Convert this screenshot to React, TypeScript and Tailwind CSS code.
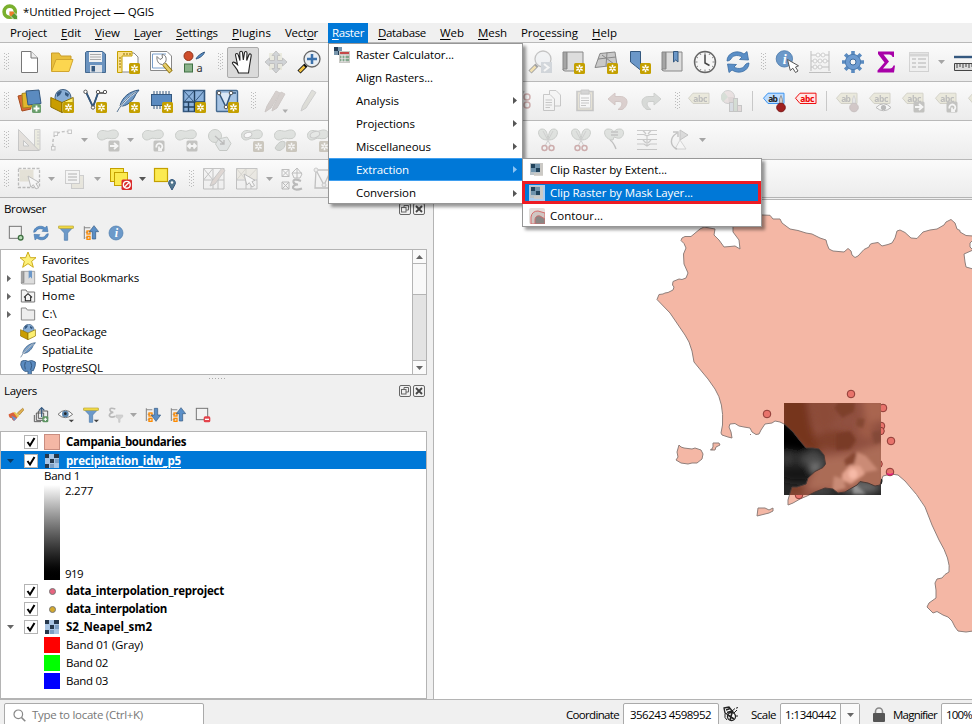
import { useLayoutEffect, useRef } from "react";
import type { ReactNode } from "react";

/* Text run whose tracking is adjusted so that it occupies a given width. */
function T({ w, c = "", children }: { w: number; c?: string; children: ReactNode }) {
  const ref = useRef<HTMLSpanElement>(null);
  useLayoutEffect(() => {
    const el = ref.current;
    if (!el) return;
    el.style.letterSpacing = "0px";
    const n = (el.textContent || "").length;
    el.style.letterSpacing = (w - el.getBoundingClientRect().width) / n + "px";
  }, [w]);
  return (
    <span ref={ref} className={"inline-block whitespace-pre shrink-0 " + c}>
      {children}
    </span>
  );
}

const U = ({ children }: { children: ReactNode }) => (
  <span className="underline underline-offset-2 decoration-1">{children}</span>
);

function I({ children, dim = false }: { children: ReactNode; dim?: boolean }) {
  return (
    <svg viewBox="0 0 24 24" fill="none" className={dim ? "h-6 w-6 shrink-0 overflow-visible opacity-35" : "h-6 w-6 shrink-0 overflow-visible"}>
      {children}
    </svg>
  );
}

function Cell({ children }: { children?: ReactNode }) {
  return <div className="flex h-8 w-[33px] shrink-0 items-center justify-center">{children}</div>;
}

function Grip({ c = "w-4 pr-[3px]" }: { c?: string }) {
  return (
    <div className={"flex shrink-0 items-center justify-end " + c}>
      <svg className="h-[18px] w-[5px]" viewBox="0 0 5 18">
        {[0, 3, 6, 9, 12, 15].map((y) => (
          <g key={y} fill="#bcbcbc">
            <rect x="0" y={y} width="1" height="1" />
            <rect x="2" y={y + 1} width="1" height="1" />
            <rect x="4" y={y} width="1" height="1" />
          </g>
        ))}
      </svg>
    </div>
  );
}

function Arrow({ c = "w-3", dark = false }: { c?: string; dark?: boolean }) {
  return (
    <div className={"flex shrink-0 items-center justify-center " + c}>
      <svg className="h-1 w-[7px]" viewBox="0 0 7 4">
        <path d="M0 0H7L3.5 4Z" fill={dark ? "#555" : "#a5a5a5"} />
      </svg>
    </div>
  );
}

const Sep = ({ c }: { c: string }) => (
  <div className={"flex h-5 shrink-0 justify-center " + c}>
    <div className="w-px bg-[#c8c8c8]" />
  </div>
);

function Bar({ h, children }: { h: string; children: ReactNode }) {
  return (
    <div
      className={
        "flex shrink-0 items-center overflow-hidden border-t border-[#b9b9b9] bg-gradient-to-b from-[#fbfbfb] to-[#ececec] " + h
      }
    >
      {children}
    </div>
  );
}

/* ---------- icon parts ---------- */
const Star = ({ fill = "#c4a000" }: { fill?: string }) => (
  <g>
    <rect x="13" y="13" width="11" height="11" rx="1.5" fill={fill} />
    <path d="M18.5 14.8V22.2M15.3 16.6L21.7 20.4M21.7 16.6L15.3 20.4" stroke="#fff" strokeWidth="1.6" />
    <circle cx="18.5" cy="18.5" r="1" fill={fill} />
  </g>
);
const Gray = ({ d }: { d: string }) => (
  <g>
    <rect x="12.5" y="12.5" width="11" height="11" rx="1.5" fill="#6f6f68" />
    <path d={d} stroke="#fff" strokeWidth="1.8" />
  </g>
);
const ARR = "M14 18H21M18 15L21.5 18L18 21";
const ROT = "M15.5 19.5A3 3 0 1 1 18.5 21.5M18 18.5V22H21";
const LR = "M14 18H22M16.5 15.5L14 18L16.5 20.5M19.5 15.5L22 18L19.5 20.5";
const BLOB = "M1.5 7.5C1.5 3 6 1.5 10 3C13 4 15 1.5 18.5 2C23.5 2.5 23.5 9.5 19 10.5C14 11.5 12 9 9 11C5 13.5 1.5 11 1.5 7.5Z";
const Blob = () => <path d={BLOB} fill="#b5bdb5" stroke="#777f77" />;
const Cursor = ({ x = 11, y = 10 }: { x?: number; y?: number }) => (
  <path
    transform={`translate(${x} ${y})`}
    d="M0 0L2.8 11L5.3 8.7L8 13L10.5 11.5L8 7.6L11 6.3Z"
    fill="#fff"
    stroke="#555"
    strokeWidth="1"
  />
);
const Tag = ({ fill = "#d6d2ae", stroke = "#969278", text = "#555", label = "abc" }) => (
  <g>
    <path d="M1.5 9.2L6 4.2H22V14.5H6Z" fill={fill} stroke={stroke} />
    <text x="6.3" y="12.5" fontSize="8.5" fontWeight="700" fontFamily="Noto Sans, sans-serif" fill={text} textLength={label === "ab" ? 9.5 : 14}>
      {label}
    </text>
  </g>
);
const Thermo = ({ fill, stroke }: { fill: string; stroke: string }) => (
  <g>
    <path d="M17.5 10L19 6.5L20.5 10.5V15H17.5Z" fill="#ccc" stroke="#999" />
    <circle cx="19" cy="18.5" r="4.3" fill={fill} stroke={stroke} />
  </g>
);
const Feather = () => (
  <g>
    <path d="M23 1C14 2 6 8 4 17C10 18 17 12 19 7C20 4 22 3 23 1Z" fill="#6d97c4" stroke="#34587f" />
    <path d="M20 3C12 8 6 14 1 23" stroke="#eee" strokeWidth="1.6" />
    <path d="M20 3C12 8 6 14 1 23" stroke="#34587f" strokeWidth=".8" />
  </g>
);
const Refresh = () => (
  <g fill="#5b8fc7" stroke="#3b6da3" strokeWidth=".8">
    <path d="M1 11C1 3 11-1 18 4L21 1.5L22.5 10L13.5 9.5L16 7C11 4 6 6 5 9C4 10.5 2 11 1 11Z" />
    <path d="M23 13C23 21 13 25 6 20L3 22.5L1.5 14L10.5 14.5L8 17C13 20 18 18 19 15C20 13.5 22 13 23 13Z" />
  </g>
);
const Book = () => (
  <g>
    <path d="M2 2H6V20H2Z" fill="#a5a5a5" stroke="#888" />
    <path d="M6 2H22V21H4Q2 21 2 19H6Z" fill="#ddd" stroke="#888" />
  </g>
);
const Info = () => (
  <g>
    <circle cx="12" cy="12" r="10.5" fill="#6c99c9" stroke="#4878aa" />
    <text x="12.5" y="18.5" fontSize="18" fontStyle="italic" fontWeight="700" textAnchor="middle" fontFamily="Liberation Serif, serif" fill="#fff">
      i
    </text>
  </g>
);
const Package = () => (
  <g strokeLinejoin="round">
    <circle cx="13" cy="8.5" r="8" fill="#89aed5" stroke="#3c5d80" />
    <path d="M7 4Q10 1 12 2.5L10 6L7 8ZM15 3L19 5L18 8L15 6Z" fill="#34587f" />
    <path d="M.8 8.5L12 13.5V23.5L.8 18Z" fill="#c99d00" stroke="#8d6f00" />
    <path d="M12 13.5L23.2 8.5V18L12 23.5Z" fill="#fcef70" stroke="#8d6f00" />
  </g>
);
const ColTree = ({ down = false }: { down?: boolean }) => (
  <g>
    <path d="M2 2V21M2 4H11M4 11H8M4 19H8" stroke="#888" strokeWidth="1.6" />
    <rect x="6" y="9" width="4.5" height="4.5" stroke="#ff8b00" strokeWidth="2" />
    <rect x="6" y="17" width="4.5" height="4.5" stroke="#ff8b00" strokeWidth="2" />
    <path
      d={down ? "M14 2H19V12H23.5L16.5 21.5L9.5 12H14Z" : "M14 21H19V10H23.5L16.5 1L9.5 10H14Z"}
      fill="#5b8fc7"
      stroke="#34587f"
    />
  </g>
);
const Funnel = () => (
  <g>
    <path d="M1 3H23L14.5 12V23H9.5V12Z" fill="#6c99c9" stroke="#4878aa" />
    <path d="M1 1.5H23V5H1Z" fill="#f7e04a" stroke="#b8a22a" />
  </g>
);
const Raster = () => (
  <svg viewBox="0 0 14 14" className="h-[14px] w-[14px] shrink-0">
    <rect width="14" height="14" fill="#a9c5e4" />
    <path d="M0 0H4V4H0ZM9 0H14V4H9ZM5 5H9V9H5ZM0 10H4V14H0Z" fill="#26384c" />
    <path d="M10 5H14V9H10ZM5 10H9V14H5Z" fill="#7d9fc4" />
  </svg>
);
const Magnifier = () => (
  <g>
    <path d="M9 15L2 22" stroke="#111" strokeWidth="4.5" />
    <path d="M7.5 16.5L2.5 21.5" stroke="#f2c13e" strokeWidth="2.5" />
    <circle cx="15" cy="9" r="8" fill="#e9eef3" stroke="#666" strokeWidth="1.3" />
  </g>
);
const Scissors = () => (
  <g>
    <path d="M11 12C2 12 0 1 6 1C11 1 11 6 12 11C13 6 13 1 18 1C24 1 22 12 13 12" fill="#b5bdb5" stroke="#777f77" />
    <path d="M7 3L15 18M17 3L9 18" stroke="#888" />
    <circle cx="8.5" cy="20" r="2.5" stroke="#8b3030" strokeWidth="1.5" />
    <circle cx="15.5" cy="20" r="2.5" stroke="#8b3030" strokeWidth="1.5" />
  </g>
);
const GridSel = () => (
  <g stroke="#666">
    <path d="M1.5 1.5H22V22H1.5ZM1.5 13H22M11 1.5V22M16 13V22" fill="#eee" />
    <path d="M1.5 1.5L11 13M11 1.5L1.5 13M11 13L22 1.5" />
  </g>
);

function ToolbarOne() {
  return (
    <Bar h="h-[39px]">
      <Grip c="w-3 pr-[3px]" />
      <Cell>
        <I><path d="M4.5 1.5H14L20.5 8V22.5H4.5Z" fill="#fff" stroke="#777" /><path d="M14 1.5V8H20.5" stroke="#777" fill="#eee" /></I>
      </Cell>
      <Cell>
        <I><path d="M1.5 21V3H9L11 6H21V10" fill="#e9bf3d" stroke="#c99d2a" /><path d="M1.5 21.5L6 9.5H23L19 21.5Z" fill="#fcd64f" stroke="#d1a52e" /></I>
      </Cell>
      <Cell>
        <I>
          <path d="M3.5 1.5H19.5L22.5 4V22.5H2.5V2.5Z" fill="#6b93bf" stroke="#44698f" />
          <rect x="6" y="2" width="13" height="10" fill="#f2f2f2" /><path d="M7 4.5H18M7 7H18M7 9.5H18" stroke="#aaa" />
          <rect x="7" y="15" width="12" height="7.5" fill="#dfe3e8" /><rect x="8.5" y="16" width="3.5" height="5.5" fill="#34587f" />
        </I>
      </Cell>
      <Cell>
        <I>
          <path d="M2 3H18L22 7V22H2Z" fill="#fff" stroke="#888" />
          <path d="M1.5 1.5H16V6H6V22.5H1.5Z" fill="#fbe08a" stroke="#c4a000" /><path d="M3 8H5M3 11H5M3 14H5M3 17H5M8 3V5M11 3V5M14 3V5" stroke="#8d6f00" />
          <Star />
        </I>
      </Cell>
      <Cell>
        <I>
          <path d="M1.5 1.5H18L22.5 6V20.5H1.5Z" fill="#fff" stroke="#888" /><path d="M3.5 4H17M3.5 4V18H18" stroke="#7ba0cc" />
          <path d="M15 14L22 22" stroke="#8d6f00" strokeWidth="4.5" /><path d="M15 14L21.5 21.5" stroke="#e5cd6c" strokeWidth="2.8" />
          <path d="M8 6.5L11 9.5L13.5 8L13 4.5C17 4.5 18 9 16.5 12L13.5 14.5C9 14.5 7.5 10 8 6.5Z" fill="#fff" stroke="#777" />
        </I>
      </Cell>
      <Cell>
        <I>
          <circle cx="6.5" cy="6" r="4.5" fill="#cf4e2c" stroke="#93341a" /><rect x="2.5" y="14" width="8" height="8" fill="#8ab28a" stroke="#3f7042" />
          <path d="M14 9C15 6 20 3 22.5 2C22 5 18 8 14 9Z" fill="#5b8fc7" stroke="#34587f" />
          <text x="14.5" y="21.5" fontSize="11" fontFamily="Noto Sans, sans-serif" fill="#333">a</text>
        </I>
      </Cell>
      <Grip />
      <Cell>
        <div className="ml-px flex h-[31px] w-[32px] shrink-0 items-center justify-center rounded-[2px] border border-[#ababab] bg-[#dadada]">
          <I>
            <path
              d="M7.5 23C6.5 19 4 17 1.5 13.5C1 11.5 3.5 11.5 6.5 14.5L4.5 5C4.5 3 6.8 3 7.3 5L9 10.5L8.7 2.5C9 .7 11.3.8 11.5 2.5L12.3 10L13.5 2.7C14 1 16 1.2 16 3.2L15.7 10.5L18 4.5C18.8 3.2 20.6 4 20.2 5.7L18.5 16L17.5 23Z"
              fill="#fff" stroke="#222" strokeWidth="1.1"
            />
          </I>
        </div>
      </Cell>
      <Cell>
        <I dim>
          <path d="M5 3H18V20H5Z" fill="#d5d5b8" />
          <path d="M12 1L16 5.5H13.5V10.5H18.5V8L23 12L18.5 16V13.5H13.5V18.5H16L12 23L8 18.5H10.5V13.5H5.5V16L1 12L5.5 8V10.5H10.5V5.5H8Z" fill="#8f979f" stroke="#666" />
        </I>
      </Cell>
      <Cell>
        <I><Magnifier /><path d="M15 4V14M10 9H20" stroke="#3d72ab" strokeWidth="2.5" /></I>
      </Cell>
      <div className="w-[198px] shrink-0" />
      <Cell>
        <I dim><Magnifier /><rect x="13" y="12" width="11" height="11" fill="#9aa6b3" /><path d="M16 14L20.5 17.5L16 21" stroke="#fff" strokeWidth="2" /></I>
      </Cell>
      <Cell><I><Book /><Star /></I></Cell>
      <Cell>
        <I><path d="M6 3.5L21 2L23 15L1 17.5Z" fill="#c9c9c9" stroke="#888" /><path d="M4 9L22 7M13 2.5L12 16M8 5L20 14" stroke="#888" /><Star /></I>
      </Cell>
      <Cell>
        <I><path d="M3.5 1.5H13.5V20L8.5 16L3.5 12Z" fill="#6b97c8" stroke="#34587f" /><Star /></I>
      </Cell>
      <Cell>
        <I><Book /><path d="M13.5 1.5H18V12L15.7 10L13.5 12Z" fill="#6b97c8" stroke="#34587f" /></I>
      </Cell>
      <Cell>
        <I>
          <circle cx="12" cy="12" r="10.5" fill="#f6f6f6" stroke="#666" strokeWidth="1.4" />
          <path d="M12 2V4.5M12 19.5V22M2 12H4.5M19.5 12H22M7 3.5L8 5M17 3.5L16 5M20.5 7L19 8M20.5 17L19 16M3.5 7L5 8M3.5 17L5 16M7 20.5L8 19M17 20.5L16 19" stroke="#888" />
          <path d="M12 4.5V13L16.5 15.5" stroke="#444" strokeWidth="1.5" />
        </I>
      </Cell>
      <Cell><I><Refresh /></I></Cell>
      <Grip c="w-4 pr-[4px]" />
      <Cell>
        <I><g transform="translate(0 -.5) scale(.78)"><Info /></g><Cursor x={12.5} y={9.5} /></I>
      </Cell>
      <Cell>
        <I dim>
          <path d="M3 1V21M21 1V21M3 5H21M3 11H21M3 17H21M1 22.5H23" stroke="#666" strokeWidth="1.1" />
          <g fill="#fff" stroke="#888"><circle cx="10" cy="5" r="2" /><circle cx="15" cy="5" r="2" /><circle cx="7" cy="11" r="2" /><circle cx="12" cy="11" r="2" /><circle cx="17" cy="11" r="2" /><circle cx="7" cy="17" r="2" /><circle cx="12" cy="17" r="2" /></g>
        </I>
      </Cell>
      <Cell>
        <I>
          <path d="M12 1V23M1 12H23M4.2 4.2L19.8 19.8M19.8 4.2L4.2 19.8" stroke="#5b8bc0" strokeWidth="3.6" />
          <circle cx="12" cy="12" r="7.6" fill="#6d9bd0" stroke="#4a7bb1" /><circle cx="12" cy="12" r="3" fill="#f4f4f4" stroke="#3d6ca0" />
        </I>
      </Cell>
      <Cell>
        <I><path d="M4 1.5H20V7H18.5Q18 4.5 15 4.5H9.5L15 11.5L9 18.5H16Q18.5 18.5 19.5 15.5H21L20 22.5H3.5V20.5L10.5 12.5L4 4Z" fill="#a800a8" /></I>
      </Cell>
      <Cell>
        <I dim><rect x="2.5" y="2.5" width="19" height="19" fill="#eee" stroke="#999" /><path d="M3 5H21" stroke="#999" strokeWidth="3" /><path d="M5 9H9M11 9H19M5 13H9M11 13H19M5 17H9M11 17H19" stroke="#777" strokeWidth="1.5" /></I>
      </Cell>
      <Arrow />
      <Cell>
        <I><path d="M2 7H24" stroke="#34587f" strokeWidth="2.4" /><path d="M2.5 13.5H25V20.5H2.5Z" fill="#ddd" stroke="#444" /><path d="M5 14V18M8 14V17M11 14V18M14 14V17M17 14V18M20 14V17M23 14V18" stroke="#444" /></I>
      </Cell>
    </Bar>
  );
}

function ToolbarTwo() {
  return (
    <Bar h="h-[39px]">
      <Grip c="w-3 pr-[3px]" />
      <Cell>
        <I>
          <path d="M1 7L10 5L14 20L5 22Z" fill="#d76b37" stroke="#a74a1d" /><path d="M5 4.5L15 3V18L6 19Z" fill="#e0b62d" stroke="#a8851b" />
          <path d="M9 2L22 1L24 14.5L11 16Z" fill="#5b8bc0" stroke="#34587f" />
          <rect x="15" y="15" width="9" height="9" rx="1.5" fill="#6a9e6c" /><path d="M19.5 16.5V22.5M16.5 19.5H22.5" stroke="#fff" strokeWidth="1.8" />
        </I>
      </Cell>
      <Cell><I><Package /><Star /></I></Cell>
      <Cell>
        <I><path d="M3 3L10 18L15 4H22" stroke="#444" strokeWidth="1.4" /><path d="M3 3L10 18L15 4" stroke="#34587f" strokeWidth="1.8" /><g fill="#fff" stroke="#555"><circle cx="2.5" cy="2.8" r="1.7" /><circle cx="15" cy="3" r="1.7" /><circle cx="22" cy="3" r="1.7" /><circle cx="10" cy="18.5" r="1.7" /></g><Star /></I>
      </Cell>
      <Cell><I><Feather /><Star /></I></Cell>
      <Cell>
        <I><path d="M5 2V20M8 2V20M11 2V20M14 2V20M17 2V20M20 2V20" stroke="#34587f" /><rect x="2.5" y="5.5" width="20" height="11" fill="#5b8bc0" stroke="#34587f" /><Star /></I>
      </Cell>
      <Cell>
        <I><path d="M1.5 1.5H22.5V22.5H1.5Z" fill="#8cb2dc" stroke="#34587f" strokeWidth="1.6" /><path d="M1.5 13H22.5M12.5 1.5V22.5M6.5 13V22.5M1.5 18H12.5" stroke="#22405f" strokeWidth="1.4" /><path d="M2 2L12 13M12 2L2 13M12.5 13L22 2" stroke="#34587f" /><Star /></I>
      </Cell>
      <Cell>
        <I><rect x="1.5" y="1.5" width="21" height="21" rx="1" fill="#a7c4e4" stroke="#44698f" strokeWidth="1.4" /><path d="M4 4L11 18L16 4H21" fill="#dbe8f6" stroke="#34587f" strokeWidth="1.5" /><circle cx="4" cy="4" r="1.8" fill="#fff" stroke="#555" /><circle cx="16" cy="4" r="1.8" fill="#fff" stroke="#555" /><circle cx="11" cy="18" r="1.8" fill="#fff" stroke="#555" /><Star /></I>
      </Cell>
      <Grip />
      <Cell>
        <I dim><path d="M1 23L3 17L12 2L16 4L7 19ZM8 22L9 18L17 3L21 5L13 19Z" fill="#9c8c86" stroke="#8a7b75" /><path d="M18.5 20.5H24L21.2 24Z" fill="#333" /></I>
      </Cell>
      <Cell>
        <I dim><path d="M4 22L5.5 17L15 1L19 3.5L9 19Z" fill="#b5b5a6" stroke="#888" /></I>
      </Cell>
      <div className="w-[177px] shrink-0" />
      <Cell>
        <I dim><path d="M7 2L15 16M17 2L9 16" stroke="#666" strokeWidth="1.5" /><circle cx="20" cy="8" r="3" stroke="#8b3030" strokeWidth="1.5" /><circle cx="20" cy="16" r="3" stroke="#8b3030" strokeWidth="1.5" /></I>
      </Cell>
      <Cell>
        <I dim><path d="M9.5 1.5H16L20.5 6V17H9.5Z" fill="#f4f4f4" stroke="#777" /><path d="M3.5 5.5H10L14.5 10V21.5H3.5Z" fill="#f4f4f4" stroke="#777" /><path d="M5.5 11H12M5.5 13.5H12M5.5 16H12M5.5 18.5H10" stroke="#777" /></I>
      </Cell>
      <Cell>
        <I dim><path d="M4 2.5H20V21.5H4Z" fill="#ccc2a0" stroke="#777" strokeWidth="1.6" /><path d="M6.5 5H17.5V19H6.5Z" fill="#fff" stroke="#999" /><path d="M8 1H16V5H8Z" fill="#999" stroke="#777" /><path d="M8 9H16M8 11.5H16M8 14H16M8 16.5H13" stroke="#777" /></I>
      </Cell>
      <Cell>
        <I dim><path d="M2 10L9 4V7.5H14C24 7.5 22 18 16 20.5H12C17 17 17 12.5 13 12.5H9V16Z" fill="#af8f8b" stroke="#95736e" /></I>
      </Cell>
      <Cell>
        <I dim><path d="M22 10L15 4V7.5H10C0 7.5 2 18 8 20.5H12C7 17 7 12.5 11 12.5H15V16Z" fill="#a6aca6" stroke="#858b85" /></I>
      </Cell>
      <Grip c="w-[15px] pr-[2px]" />
      <Cell><I dim><Tag /></I></Cell>
      <Cell>
        <I dim><circle cx="8" cy="8" r="6.5" fill="#d3bcbc" stroke="#888" /><path d="M8 8L3 13A6.5 6.5 0 0 1 4 3Z" fill="#9eb49e" /><path d="M8 8H14.5A6.5 6.5 0 0 1 9 14.5Z" fill="#b7a2a2" /><rect x="9.5" y="13.5" width="4" height="9" fill="#a9b7c9" stroke="#777" /><rect x="13.5" y="9.5" width="4" height="13" fill="#9db69d" stroke="#777" /><rect x="17.5" y="16.5" width="4" height="6" fill="#c9b0b0" stroke="#777" /></I>
      </Cell>
      <Sep c="w-[9px]" />
      <Cell>
        <I><Tag fill="#bcdcff" stroke="#3d94ee" text="#222" label="ab" /><Thermo fill="#a02020" stroke="#7c1717" /></I>
      </Cell>
      <Cell>
        <I><g transform="translate(-1 0)"><Tag fill="#ffe6e6" stroke="#e11" text="#e00" /></g></I>
      </Cell>
      <Sep c="w-[7px]" />
      <Cell>
        <I dim><Tag label="ab" /><Thermo fill="#997c7c" stroke="#7c6767" /></I>
      </Cell>
      <Cell>
        <I dim><Tag /><path d="M8 18.5Q15.5 11 23 18.5Q15.5 25 8 18.5Z" fill="#fff" stroke="#555" /><circle cx="15.5" cy="18.5" r="2.6" fill="#555" /></I>
      </Cell>
      <Cell><I dim><Tag /><Gray d={ARR} /></I></Cell>
      <Cell><I dim><Tag /><Gray d={ROT} /></I></Cell>
      <Cell><I dim><path d="M1.5 9.2L6 4.2H22V14.5H6Z" fill="#d6d2ae" stroke="#969278" /></I></Cell>
    </Bar>
  );
}

function ToolbarThree() {
  return (
    <Bar h="h-[39px]">
      <Grip c="w-3 pr-[3px]" />
      <Cell>
        <I dim>
          <path d="M17.5 1.5H23V22H17.5Z" fill="#d8d8b8" stroke="#888" /><path d="M20 4H22.5M20 7H22.5M20 10H22.5M20 13H22.5M20 16H22.5" stroke="#888" />
          <path d="M1.5 1.5L22 22.5H1.5ZM6.5 12.5V18H12Z" fill="#c5bcb0" fillRule="evenodd" stroke="#777" />
        </I>
      </Cell>
      <Cell>
        <I dim><path d="M3 19Q2 7 8 5Q12 3 19 3.5" stroke="#666" strokeWidth="1.5" strokeDasharray="3 2" /><g fill="#fff" stroke="#777"><rect x="1.5" y="18.5" width="3.5" height="3.5" /><rect x="4" y="4" width="3.5" height="3.5" /><rect x="18" y="2" width="3.5" height="3.5" /></g></I>
      </Cell>
      <Arrow c="w-[13px]" />
      <Cell><I dim><Blob /><Gray d={ARR} /></I></Cell>
      <Arrow />
      <Cell><I dim><Blob /><Gray d={ROT} /></I></Cell>
      <Cell><I dim><Blob /><Gray d={LR} /></I></Cell>
      <Cell>
        <I dim><circle cx="8" cy="8" r="6.5" fill="#b5bdb5" stroke="#777f77" /><path d="M11.5 11L20 9L24 15.5L20 22.5H12.5L8.5 16Z" fill="#c3cccc" stroke="#777f77" /><path d="M8 8L17 16M17 12V16H13" stroke="#555" strokeWidth="1.3" /></I>
      </Cell>
      <Cell><I dim><Blob /><ellipse cx="8" cy="7" rx="4" ry="2.5" fill="#fff" stroke="#777" transform="rotate(-20 8 7)" /><Star fill="#857a60" /></I></Cell>
      <Cell><I dim><Blob /><path d="M2 20Q7 11 12 14Q13 20 7 22.5Q3 23 2 20Z" fill="#a6aea6" stroke="#777f77" /><Star fill="#857a60" /></I></Cell>
      <Cell><I dim><Blob /><ellipse cx="9" cy="7" rx="5" ry="3" fill="#c9d0c9" stroke="#777" transform="rotate(-20 8 7)" /><Star fill="#857a60" /></I></Cell>
      <div className="w-[197px] shrink-0" />
      <Cell><I dim><Scissors /></I></Cell>
      <Cell><I dim><Scissors /></I></Cell>
      <Cell>
        <I dim><path d="M11 12C2 12 0 1 6 1C11 1 11 3 12 4C13 3 13 1 18 1C24 1 22 12 15 10L12 9Z" fill="#b5bdb5" stroke="#777f77" /><path d="M9 4H16M9 7H16M8 12Q12 15 14 21" stroke="#666" strokeWidth="1.4" /></I>
      </Cell>
      <Cell>
        <I dim><path d="M2 2.5H22M2 6.5H9L12 8L15 6.5H22M2 11.5H22M2 16H9L12 18L15 16H22M2 21.5H22M8 2.5L11 6M16 2.5L13 6M8 12L11 15M16 12L13 15M12 7V17" stroke="#777" strokeWidth="1.2" /></I>
      </Cell>
      <Cell>
        <I dim><path d="M12 2L20 7L12 12Z" fill="#aaa" stroke="#666" /><path d="M12 12L18 21H7Z" fill="#fff" stroke="#999" /><path d="M9 21C2 18 1 10 9 5M5 4H10V9" stroke="#666" strokeWidth="1.4" /></I>
      </Cell>
      <Arrow />
    </Bar>
  );
}

function ToolbarFour() {
  return (
    <Bar h="h-[38px]">
      <Grip c="w-3 pr-[3px]" />
      <Cell>
        <I dim><rect x="1.5" y="1.5" width="21" height="19" stroke="#555" strokeWidth="1.3" strokeDasharray="3 1.5" /><rect x="2.5" y="2.5" width="14" height="12" fill="#c5bda0" /><g transform="translate(-1 -1)"><Cursor x={12} y={10} /></g></I>
      </Cell>
      <Arrow c="w-[13px]" />
      <Cell>
        <I dim><rect x="8.5" y="8.5" width="12" height="13" fill="#d5d0b8" stroke="#888" /><rect x="2.5" y="3.5" width="14" height="13" fill="#f5f5f5" stroke="#888" /><path d="M5 7H14M5 10H14M5 13H14" stroke="#777" strokeWidth="1.5" /></I>
      </Cell>
      <Arrow c="w-[13px]" />
      <Cell>
        <I>
          <rect x="1.5" y="1.5" width="13" height="13" fill="#fcea50" stroke="#c4a000" /><rect x="5.5" y="5.5" width="13" height="13" fill="#fcea50" stroke="#c4a000" />
          <rect x="12.5" y="12.5" width="10.5" height="10.5" rx="1.5" fill="#d92b2b" /><circle cx="17.8" cy="17.8" r="3.4" stroke="#fff" strokeWidth="1.4" /><path d="M15.5 20L20 15.5" stroke="#fff" strokeWidth="1.3" />
        </I>
      </Cell>
      <Arrow c="w-[11px]" dark />
      <Cell>
        <I><rect x="1.5" y="1.5" width="13" height="13" fill="#fcea50" stroke="#c4a000" strokeWidth="1.2" /><path d="M19 23L16 17.5A3.4 3.4 0 1 1 22 17.5Z" fill="#55798f" stroke="#34587f" /><circle cx="19" cy="15.5" r="1.2" fill="#fff" /></I>
      </Cell>
      <Grip />
      <Cell><I dim><GridSel /><path d="M8 19L10 14L20 1L23 3.5L13 17Z" fill="#b5a096" stroke="#777" /></I></Cell>
      <Cell><I dim><GridSel /><path d="M2 2H22V12H2Z" fill="#c5bda0" opacity=".6" /><Cursor x={9} y={7} /></I></Cell>
      <Arrow />
      <Cell>
        <I dim>
          <g stroke="#555"><path d="M2 2.5H9V9.5H2ZM2 2.5L9 9.5M9 2.5L2 9.5M17 1L22 7L20 11H14L12 6ZM12 6H22M17 1V11M2 15H9V22H2ZM2 15L9 22M9 15L2 22" /></g>
          <path d="M21 14Q13 11 13.5 15Q14 17.5 18 17.5Q12.5 18 13 21Q15 24 22 21.5" stroke="#555" strokeWidth="2.2" />
        </I>
      </Cell>
      <Cell>
        <I dim><path d="M3 3H22V21H2ZM3 3L11 18L18 3" stroke="#666" strokeWidth="1.3" /><g fill="#ddd" stroke="#777"><circle cx="3" cy="3" r="2" /><circle cx="11" cy="18" r="2" /></g></I>
      </Cell>
    </Bar>
  );
}

/* ---------- menus ---------- */
function RightTri({ c }: { c: string }) {
  return (
    <svg viewBox="0 0 4 7" className="h-[7px] w-1 shrink-0">
      <path d="M0 0V7L4 3.5Z" fill={c} />
    </svg>
  );
}

const rasterItems: { label: string; w: number; sub: boolean; h: string }[] = [
  { label: "Raster Calculator...", w: 98, sub: false, h: "h-[22px]" },
  { label: "Align Rasters...", w: 77, sub: false, h: "h-[23px]" },
  { label: "Analysis", w: 43, sub: true, h: "h-[23px]" },
  { label: "Projections", w: 59, sub: true, h: "h-[23px]" },
  { label: "Miscellaneous", w: 75, sub: true, h: "h-[23px]" },
  { label: "Extraction", w: 53, sub: true, h: "h-[23px]" },
  { label: "Conversion", w: 60, sub: true, h: "h-[22px] pt-[2px]" },
];

const ClipIcon = ({ lit = false }: { lit?: boolean }) => (
  <svg viewBox="0 0 16 16" className="h-4 w-4 shrink-0">
    {lit && <rect width="16" height="16" fill="#a9cdf0" />}
    <rect x="1" y="1" width="13" height="12" fill="#b9c3c9" />
    <path d="M2 2H6V6H2ZM7 6H11V10H7Z" fill="#20435c" />
    <path d="M6 2H11V6H6ZM2 6H7V10H2Z" fill="#6f93ac" />
    <path d="M11 1H14V14H5V11H11Z" fill="#cfcac4" opacity=".8" />
  </svg>
);

function Menus() {
  return (
    <>
      <div className="absolute left-[328px] top-[43px] z-10 h-[161px] w-[195px] border border-[#979797] bg-white shadow-[3px_3px_3px_rgba(0,0,0,0.4)]">
        {rasterItems.map((m) => (
          <div
            key={m.label}
            className={
              "flex items-center pr-[5px] " + m.h + (m.label === "Extraction" ? " border-y border-[#3f9ff0] bg-[#0078d7] text-white" : "")
            }
          >
            <div className="flex w-[27px] shrink-0 justify-center pr-px">
              {m.label === "Raster Calculator..." && (
                <svg viewBox="0 0 16 16" className="h-4 w-4">
                  <path d="M0 0H4V4H0ZM4 4H8V8H4Z" fill="#263e55" /><path d="M4 0H8V4H4ZM0 4H4V8H0Z" fill="#7896ac" />
                  <rect x="5" y="4" width="11" height="12" fill="#c9c9c5" /><path d="M6 6H15" stroke="#c54848" strokeWidth="2" /><path d="M6 10H15M6 13H15" stroke="#699c79" strokeWidth="1.5" /><path d="M8 8V15M11 8V15" stroke="#eee" />
                </svg>
              )}
            </div>
            <T w={m.w}>{m.label}</T>
            <div className="grow" />
            {m.sub && <RightTri c={m.label === "Extraction" ? "#8cc4f4" : "#555"} />}
          </div>
        ))}
      </div>
      <div className="absolute left-[522px] top-[158px] z-20 h-[69px] w-[240px] border border-[#979797] bg-white shadow-[3px_3px_3px_rgba(0,0,0,0.4)]">
        <div className="flex h-[22px] items-center pl-[6px]">
          <ClipIcon />
          <T w={117} c="ml-[5px]">Clip Raster by Extent...</T>
        </div>
        <div className="-ml-px flex h-[23px] w-[239px] items-center border-[3px] border-[#ed1c24] bg-[#0078d7] pl-1 text-white">
          <ClipIcon lit />
          <T w={143} c="ml-[5px]">Clip Raster by Mask Layer...</T>
        </div>
        <div className="flex h-[22px] items-center pl-[6px] pt-[2px]">
          <svg viewBox="0 0 16 16" className="h-4 w-4 shrink-0">
            <rect width="16" height="16" rx="2" fill="#e3dfdc" />
            <path d="M2 16V9Q3 3 9 3L16 5V16Z" fill="#cfc6c2" stroke="#d66a6a" />
            <path d="M6 16V11Q7 7 11 8L16 11V16Z" fill="#8a8684" stroke="#c97070" />
          </svg>
          <T w={53} c="ml-[5px]">Contour...</T>
        </div>
      </div>
    </>
  );
}

const menuItems: { a: string; u: string; b: string; w: number }[] = [
  { a: "Pro", u: "j", b: "ect", w: 37 },
  { a: "", u: "E", b: "dit", w: 20 },
  { a: "", u: "V", b: "iew", w: 25 },
  { a: "", u: "L", b: "ayer", w: 28 },
  { a: "", u: "S", b: "ettings", w: 42 },
  { a: "", u: "P", b: "lugins", w: 39 },
  { a: "Vect", u: "o", b: "r", w: 33 },
  { a: "", u: "R", b: "aster", w: 32 },
  { a: "", u: "D", b: "atabase", w: 48 },
  { a: "", u: "W", b: "eb", w: 24 },
  { a: "", u: "M", b: "esh", w: 29 },
  { a: "Pro", u: "c", b: "essing", w: 57 },
  { a: "", u: "H", b: "elp", w: 25 },
];

/* ---------- docks ---------- */
function DockTitle({ children, c }: { children: ReactNode; c: string }) {
  return (
    <div className={"flex items-center pl-1 pr-[3px] " + c}>
      {children}
      <div className="grow" />
      <svg viewBox="0 0 26 12" className="h-3 w-[26px]" fill="none" stroke="#666">
        <rect x=".5" y=".5" width="11" height="11" rx="1.5" /><rect x="2.5" y="4.5" width="4.5" height="4.5" /><path d="M5 4.5V2.5H9.5V7H7" />
        <rect x="14.5" y=".5" width="11" height="11" rx="1.5" /><path d="M17 3L23 9M23 3L17 9" stroke="#444" strokeWidth="1.8" />
      </svg>
    </div>
  );
}

const Small = ({ children, dim = false }: { children: ReactNode; dim?: boolean }) => (
  <svg viewBox="0 0 24 24" fill="none" className={dim ? "h-4 w-4 shrink-0 opacity-35" : "h-4 w-4 shrink-0"}>
    {children}
  </svg>
);

const BookSmall = () => (
  <Small>
    <Book /><path d="M13 1H18V13L15.5 10L13 13Z" fill="#6b97c8" />
  </Small>
);

const browserRows: { label: string; w: number; open: boolean; icon: ReactNode }[] = [
  { label: "Favorites", w: 47, open: false, icon: <Small><path d="M12 0L15.5 8.5H24L17.5 14L20 23L12 17.5L4 23L6.5 14L0 8.5H8.5Z" fill="#fdf07a" stroke="#c4a000" strokeWidth="1.3" /></Small> },
  { label: "Spatial Bookmarks", w: 97, open: true, icon: <BookSmall /> },
  { label: "Home", w: 33, open: true, icon: <Small><path d="M2 3H9L11 6H22V21H2Z" fill="#f3f3f3" stroke="#777" strokeWidth="1.5" /><path d="M6 14L12 8.5L18 14M8 13V19H16V13" stroke="#222" strokeWidth="1.6" /></Small> },
  { label: "C:\\", w: 15, open: true, icon: <Small><path d="M2 3H9L11 6H22V21H2Z" fill="#ededed" stroke="#888" strokeWidth="1.5" /></Small> },
  { label: "GeoPackage", w: 65, open: false, icon: <Small><Package /></Small> },
  { label: "SpatiaLite", w: 51, open: false, icon: <Small><Feather /></Small> },
  { label: "PostgreSQL", w: 61, open: false, icon: <Small><path d="M2 2Q7-1 12 2Q18-1 23 3Q24 8 20 16H17V22Q14 25 12 22V17H7Q3 15 1 7Z" fill="#5b8bc0" stroke="#34587f" strokeWidth="1.3" /><path d="M8 3Q6 8 8 14M16 3Q19 8 16 15" stroke="#34587f" strokeWidth="1.5" /></Small> },
];

function Check() {
  return (
    <svg viewBox="0 0 14 14" className="h-[14px] w-[14px] shrink-0">
      <rect x=".5" y=".5" width="13" height="13" fill="#fff" stroke="#b4b4b4" />
      <path d="M3.5 7L6 10.5L10.5 3" stroke="#000" strokeWidth="2" fill="none" />
    </svg>
  );
}

function LayerRow({ children, open = false, sel = false, label, w }: { children: ReactNode; open?: boolean; sel?: boolean; label: string; w: number }) {
  return (
    <div className={"flex h-[18px] items-center " + (sel ? "bg-[#0078d7] pt-px text-white" : "")}>
      <div className="flex w-[23px] shrink-0 pl-1.5">
        {open && (
          <svg viewBox="0 0 7 4" className="h-1 w-[7px]"><path d="M0 0H7L3.5 4Z" fill={sel ? "#0b3a63" : "#666"} /></svg>
        )}
      </div>
      <Check />
      <div className="flex w-[28px] shrink-0 items-center justify-center">{children}</div>
      <T w={w} c={sel ? "font-bold underline underline-offset-2" : "font-bold"}>{label}</T>
    </div>
  );
}

function BrowserDock() {
  return (
    <div className="flex flex-col">
      <DockTitle c="h-[19px] pt-px"><T w={42}>Browser</T></DockTitle>
      <div className="flex h-[31px] items-center gap-[9px] pb-[2px] pl-2">
        <Small><rect x="2" y="2" width="18" height="18" fill="#f3f3f3" stroke="#777" strokeWidth="1.5" /><circle cx="19" cy="19" r="3.5" fill="#b8ddb8" stroke="#3f7042" strokeWidth="2" /></Small>
        <Small><Refresh /></Small>
        <Small><Funnel /></Small>
        <Small><ColTree /></Small>
        <Small><Info /></Small>
      </div>
      <div className="flex h-[126px] w-[427px] overflow-hidden border border-[#b4b4b4] bg-white">
        <div className="grow pt-px">
          {browserRows.map((r) => (
            <div key={r.label} className="flex h-[18px] items-center">
              <div className="flex w-[19px] shrink-0 pl-1.5">{r.open && <RightTri c="#666" />}</div>
              {r.icon}
              <T w={r.w} c="ml-1.5">{r.label}</T>
            </div>
          ))}
        </div>
        <div className="flex w-[14px] flex-col border-l border-[#b4b4b4] bg-[#e3e3e3]">
          <div className="flex h-[14px] items-center justify-center border-b border-[#b4b4b4] bg-[#fafafa]">
            <svg viewBox="0 0 7 4" className="h-1 w-[7px]"><path d="M0 4H7L3.5 0Z" fill="#666" /></svg>
          </div>
          <div className="h-[31px] border-b border-[#b4b4b4] bg-[#f8f8f8]" />
          <div className="grow" />
          <div className="flex h-[14px] items-center justify-center border-t border-[#b4b4b4] bg-[#fafafa]">
            <svg viewBox="0 0 7 4" className="h-1 w-[7px]"><path d="M0 0H7L3.5 4Z" fill="#666" /></svg>
          </div>
        </div>
      </div>
    </div>
  );
}

function LayersDock() {
  return (
    <div className="flex flex-col">
      <DockTitle c="h-[18px]"><T w={33}>Layers</T></DockTitle>
      <div className="flex h-[31px] items-center pb-[2px] pl-2">
        <Small><path d="M14 9L22 2L24 4L17 12Z" fill="#e0b050" stroke="#a77a25" /><path d="M10 7L17 13L13 17L7 10Z" fill="#e8c34e" /><path d="M1 11L8 8L14 16L9 21Q5 19 6 17Q1 17 1 11Z" fill="#d9603b" /><path d="M5 13L13 17L9 21Z" fill="#6a8fd0" /></Small>
        <div className="w-[9px]" />
        <Small><path d="M8 6H22V17H8Z M5 9H16V20H5ZM2 12V22H12" stroke="#555" strokeWidth="1.4" fill="#eee" /><path d="M13 2V15M9 5L13 1L17 5" stroke="#34587f" strokeWidth="1.8" /><rect x="14" y="14" width="9" height="9" rx="2" fill="#5e9463" /><path d="M18.5 16V21M16 18.5H21" stroke="#fff" strokeWidth="1.6" /></Small>
        <div className="w-[9px]" />
        <Small><path d="M0 11Q11-1 22 11Q11 21 0 11Z" fill="#fff" stroke="#777" strokeWidth="1.5" /><circle cx="11" cy="10.5" r="5" fill="#5b86ae" /><circle cx="11" cy="10" r="2" fill="#222" /><path d="M16 19H24L20 23Z" fill="#444" /></Small>
        <div className="w-[9px]" />
        <Small><Funnel /><path d="M16 19H24L20 23Z" fill="#444" /></Small>
        <div className="w-[9px]" />
        <Small dim><path d="M11 3Q2 0 3 5Q4 8 8 8Q2 9 2 13Q4 17 11 14" stroke="#555" strokeWidth="2.5" /><path d="M12 12H22V15L18 18V23H16V18L12 15Z" fill="#999" stroke="#777" /></Small>
        <Arrow c="w-[19px]" />
        <div className="w-[2px]" />
        <Small><ColTree down /></Small>
        <div className="w-[9px]" />
        <Small><ColTree /></Small>
        <div className="w-[9px]" />
        <Small><rect x="2" y="2" width="17" height="17" fill="#f3f3f3" stroke="#777" strokeWidth="1.5" /><rect x="13" y="14" width="10" height="9" rx="2.5" fill="#e4444c" /><path d="M15 18.5H21" stroke="#fff" strokeWidth="2" /></Small>
      </div>
      <div className="flex h-[268px] w-[427px] flex-col overflow-hidden border border-[#b4b4b4] bg-white pt-px">
        <LayerRow label="Campania_boundaries" w={120}>
          <div className="h-4 w-4 border border-[#c98d80] bg-[#f4b7a5]" />
        </LayerRow>
        <LayerRow label="precipitation_idw_p5" w={115} open sel><Raster /></LayerRow>
        <div className="flex h-4 items-center pb-[2px] pl-[43px]"><T w={36}>Band 1</T></div>
        <div className="flex h-[97px] pl-[43px]">
          <div className="mb-[2px] w-4 bg-gradient-to-b from-white to-black" />
          <div className="-mt-0.5 flex flex-col items-start justify-between pl-[5px]">
            <T w={28}>2.277</T>
            <T w={18}>919</T>
          </div>
        </div>
        <LayerRow label="data_interpolation_reproject" w={158}><div className="h-[7px] w-[7px] rounded-full border border-[#777] bg-[#e8647f]" /></LayerRow>
        <LayerRow label="data_interpolation" w={101}><div className="h-[7px] w-[7px] rounded-full border border-[#777] bg-[#d4a92d]" /></LayerRow>
        <LayerRow label="S2_Neapel_sm2" w={86} open><Raster /></LayerRow>
        <div className="flex h-[18px] items-center gap-[6px] pl-[43px]"><div className="h-4 w-4 bg-[#ff0000]" /><T w={77}>Band 01 (Gray)</T></div>
        <div className="flex h-[18px] items-center gap-[6px] pl-[43px]"><div className="h-4 w-4 bg-[#00ff00]" /><T w={42}>Band 02</T></div>
        <div className="flex h-[18px] items-center gap-[6px] pl-[43px]"><div className="h-4 w-4 bg-[#0000ff]" /><T w={42}>Band 03</T></div>
      </div>
    </div>
  );
}

/* ---------- map ---------- */
const LAND =
  "M733 220L745 216L762 215L770 215.3L773 219L780 219L782 223L790 229L798 230.5L806 233L812 234L820 238L826 240L827 244L829 249L833 251L844 252L848 248.5L851 251L852 255L855 257.5L858 256L864 249.5L869 247L870 244.5L872 243.5L878 242.5L882 246L888 244.5L892 243L895 238L897 231L900 230L905 232.5L911 238L917 238.5L923 232L930 230L937 229L944 225L946 222L951 219.5L955 223L957 229L960 230.5L960 232L966 235.5L973 236L973 240L970 243L970 247L973 250L964 254L965 262L966 267L973 269V631L966 632L958 631L955 627L952 621L948 617L943 615L937 611.5L933 613L927 607L929 603L936 598L936 590L935 583L937 579L942 578L945 574.5L949 572Q951 560 939 540L932 525L925 507Q918 495 905 481L898 475L891 474L883 476L881.5 480L880 485L875 486L868 483L860 481.5L857 485L850 489L845 492L838 493L833 489L825 488L815 492L807 496L800 499L793 503L788 505L788 500L790 493L792 487L797 487L806 484L808 478L815 471.5L823 467.5L825.5 464L824 455L819 449L813 448L806 448L800 441L793 432L785 424.5L780 422L775 421L772 423L765 424L761 430L759 434L756 434.5L752 432L750 428L744 427L739 426L735 423.5L730 424L729 427L731 432L732 438L728 437L722 435L721 433L722.5 425Q724 403 715 389L708 379L703 373L694 362L692 351L689 342L685 335L670 313L657 299.5L659 294.5L663 294L665 293L668 292.5L673 290L674 287L672.5 285L673 281.5L679 279L682 279.5L686 278L688 273L684 264L683.5 254L686 248L684 243.5L681 240.5L682 238L685 236.5L691 236.5L700 229L704 227L715 229L714 235L719 240L724 247L730 246.5L735 246L740 249L739 240L733 232Z";

const points: [number, number][] = [[851, 394], [767, 414], [883, 408], [881, 426], [880.5, 431], [891, 441], [878.5, 464], [890, 472], [799, 495]];

function MapCanvas() {
  return (
    <svg viewBox="434 200 538 499" className="h-[499px] w-[538px] shrink-0 bg-white">
      <defs>
        <clipPath id="box"><rect x="784" y="403" width="97" height="92" /></clipPath>
        <clipPath id="land"><path d={LAND} /></clipPath>
        <filter id="soft"><feGaussianBlur stdDeviation="1.6" /></filter>
        <filter id="wide"><feGaussianBlur stdDeviation="3.5" /></filter>
      </defs>
      <g fill="#f4b7a5" stroke="#8f7f7b" strokeWidth="1">
        <path d={LAND} />
        <path d="M679 445L681 447L684 448L692 449L695 448L701 450L703 454L702 459L697 463L692 463L688 464L681 463L676 460L678 457L677 452Z" />
        <path d="M713 443L719 443L720 445L716 447L715 450L711 450L713 447Z" />
        <path d="M758 508L765 508L769 510L773 508L773 511L769 513L765 514L757 516Z" />
        <path d="M750 434.5H751M710 450L713 449" />
      </g>
      {points.map(([x, y]) => (
        <circle key={`${x}-${y}`} cx={x} cy={y} r="3.8" fill="#e8736b" stroke="#8c3a35" strokeWidth="1" />
      ))}
      <path d="M887 473.5Q890 476 893 473.5" stroke="#e01b84" strokeWidth="1.5" fill="none" />
      <path d="M881.5 479Q882.5 481 881 484" stroke="#222" strokeWidth="1.5" fill="none" />
      <g clipPath="url(#box)">
        <rect x="784" y="403" width="97" height="92" fill="#262626" />
        <g filter="url(#wide)">
          <path d="M776 415L812 444L806 452L776 448Z" fill="#000" />
          <ellipse cx="798" cy="474" rx="20" ry="8" fill="#121212" />
          <path d="M798 458L814 450L828 460L822 470L808 468Z" fill="#4b4b4b" />
          <path d="M812 463L822 468L812 474Z" fill="#8a8a8a" />
          <ellipse cx="787" cy="459" rx="8" ry="5" fill="#3b3b3b" />
          <ellipse cx="818" cy="491" rx="16" ry="4" fill="#4c4c4c" />
          <ellipse cx="860" cy="487" rx="20" ry="7" fill="#686868" />
        </g>
        <path d="M853 482L866 494H853Z" fill="#aaa" opacity=".7" filter="url(#soft)" />
        <g clipPath="url(#land)">
          <rect x="784" y="403" width="97" height="92" fill="#905040" />
          <g filter="url(#wide)">
            <path d="M778 396H806L812 430L822 452L805 450L780 428Z" fill="#76361f" />
            <path d="M810 398H832L838 416L828 430L816 428Z" fill="#8c4c39" />
            <path d="M862 398H886V420L866 424Z" fill="#a9654f" />
            <path d="M858 420L874 422L872 440L860 436Z" fill="#9f5b47" />
            <ellipse cx="834" cy="440" rx="20" ry="9" fill="#803f2c" />
            <path d="M818 458L848 454L886 442V490H806L812 474Z" fill="#ab6c57" />
            <ellipse cx="794" cy="490" rx="10" ry="6" fill="#7c3f29" />
          </g>
          <g filter="url(#soft)">
            <path d="M842 418L854 412L855 402H838L834 408Z" fill="#7e3f2c" />
            <path d="M836 434L850 431L856 440L850 449L836 450Z" fill="#793a28" />
            <path d="M857 418L865 419L863 428L856 426Z" fill="#844632" />
            <path d="M872 432L882 430V442L874 444Z" fill="#844a37" />
            <path d="M844 460L854 452L858 455L853 464L846 466Z" fill="#874733" />
            <path d="M857 452L866 456L878 470L862 473L854 466Z" fill="#cb8b76" />
            <path d="M842 474L850 465L860 466L865 474L851 484L842 480Z" fill="#e3a38e" />
            <path d="M834 476L843 479L846 488L832 492Z" fill="#c98b76" />
            <ellipse cx="853" cy="474" rx="4.5" ry="5" fill="#f6baa7" />
          </g>
        </g>
        <path d={LAND} fill="none" stroke="#4a3a36" />
      </g>
    </svg>
  );
}

function StatusBar() {
  return (
    <div className="flex h-[25px] shrink-0 items-start border-t border-[#b4b4b4] bg-[#f0f0f0] pl-1">
      <div className="mt-[3px] flex h-6 w-[200px] shrink-0 items-center rounded-[2px] border border-[#aaa] bg-white pl-2 text-[#777]">
        <svg viewBox="0 0 13 13" className="h-[13px] w-[13px]" fill="none" stroke="#888" strokeWidth="1.2"><circle cx="5.3" cy="5.3" r="4.3" /><path d="M8.5 8.5L12.3 12.3" strokeWidth="1.6" /></svg>
        <T w={111} c="ml-[6px]">Type to locate (Ctrl+K)</T>
      </div>
      <div className="mt-[3px] flex h-6 shrink-0 items-center pl-[362px]">
        <T w={53}>Coordinate</T>
        <div className="ml-1 flex h-6 w-24 shrink-0 items-center rounded-[2px] border border-[#aaa] bg-white pl-1.5"><T w={81}>356243 4598952</T></div>
        <svg viewBox="0 0 16 16" className="mb-0.5 ml-[4px] h-4 w-4 shrink-0" fill="none" stroke="#222" strokeWidth="1.3">
          <path d="M1 2L6 1L10 6L6 9L2 7Z" fill="#fff" /><path d="M3 4L7 2.5M4 6.5L9 5" strokeWidth="1.8" /><circle cx="8.5" cy="10.5" r="4" fill="#fff" /><path d="M5 9L11 13M9 7L7 14" strokeWidth="1.6" /><path d="M9 5L12 2.5M13 2.2L15 1.5M11 7L14 4M12.5 10H15M2 8Q1 12 4 14" strokeWidth="1" />
        </svg>
        <T w={25} c="ml-3">Scale</T>
        <div className="ml-1 flex h-6 w-20 shrink-0 items-center rounded-[2px] border border-[#aaa] bg-white pl-1">
          <T w={51}>1:1340442</T>
          <div className="ml-auto flex h-full w-[19px] items-center justify-center border-l border-[#aaa] bg-[#fafafa]">
            <svg viewBox="0 0 7 4" className="h-1 w-[7px]"><path d="M0 0H7L3.5 4Z" fill="#666" /></svg>
          </div>
        </div>
        <svg viewBox="0 0 12 15" className="mb-0.5 ml-[13px] h-[15px] w-3 shrink-0"><path d="M2.5 7V4.5A3.5 3.5 0 0 1 9.5 4.5V7" fill="none" stroke="#888" strokeWidth="1.6" /><rect x="0" y="6" width="12" height="9" rx="1" fill="#555" /></svg>
        <T w={44} c="ml-2">Magnifier</T>
        <div className="ml-1 flex h-6 w-14 shrink-0 items-center rounded-[2px] border border-[#aaa] bg-white pl-1"><T w={26}>100%</T></div>
      </div>
    </div>
  );
}

export default function App() {
  return (
    <div className="relative flex h-[724px] w-[972px] flex-col overflow-hidden bg-[#f0f0f0] font-['Open_Sans','Noto_Sans',sans-serif] text-[11.5px] leading-[16px] text-black">
      <div className="flex h-[23px] shrink-0 items-center bg-white pl-[2px]">
        <svg viewBox="0 0 16 16" className="h-4 w-4 shrink-0" fill="none">
          <circle cx="7.7" cy="7.7" r="5.6" stroke="#7ab02e" strokeWidth="3.6" />
          <path d="M7.5 7.5H11L15.5 12V15.5H12L7.5 11Z" fill="#5a9a33" stroke="#fff" strokeWidth=".7" />
          <path d="M7.5 7.5H11L12.5 9L9 12.5L7.5 11Z" fill="#ee7c2b" />
        </svg>
        <T w={131} c="ml-[5px]">*Untitled Project — QGIS</T>
      </div>
      <div className="flex h-[19px] shrink-0 gap-1.5 pl-1.5">
        {menuItems.map((m) => (
          <div
            key={m.u + m.b}
            className={"relative flex h-5 items-center px-1 " + (m.b === "aster" ? "z-10 bg-[#0078d7] text-white" : "")}
          >
            <T w={m.w}>{m.a}<U>{m.u}</U>{m.b}</T>
          </div>
        ))}
      </div>
      <ToolbarOne />
      <ToolbarTwo />
      <ToolbarThree />
      <ToolbarFour />
      <div className="h-[2px] shrink-0 border-t border-[#b4b4b4] bg-[#f0f0f0]" />
      <div className="flex h-[500px] min-h-0 shrink-0">
        <div className="flex w-[433px] shrink-0 flex-col">
          <div className="w-[428px]"><BrowserDock /></div>
          <div className="flex h-[7px] items-center justify-center gap-[2px]">
            {[0, 1, 2, 3, 4, 5].map((k) => <div key={k} className="h-px w-px bg-[#aaa]" />)}
          </div>
          <div className="w-[428px]"><LayersDock /></div>
        </div>
        <div className="flex border-l border-t border-[#b4b4b4]"><MapCanvas /></div>
      </div>
      <StatusBar />
      <Menus />
    </div>
  );
}
